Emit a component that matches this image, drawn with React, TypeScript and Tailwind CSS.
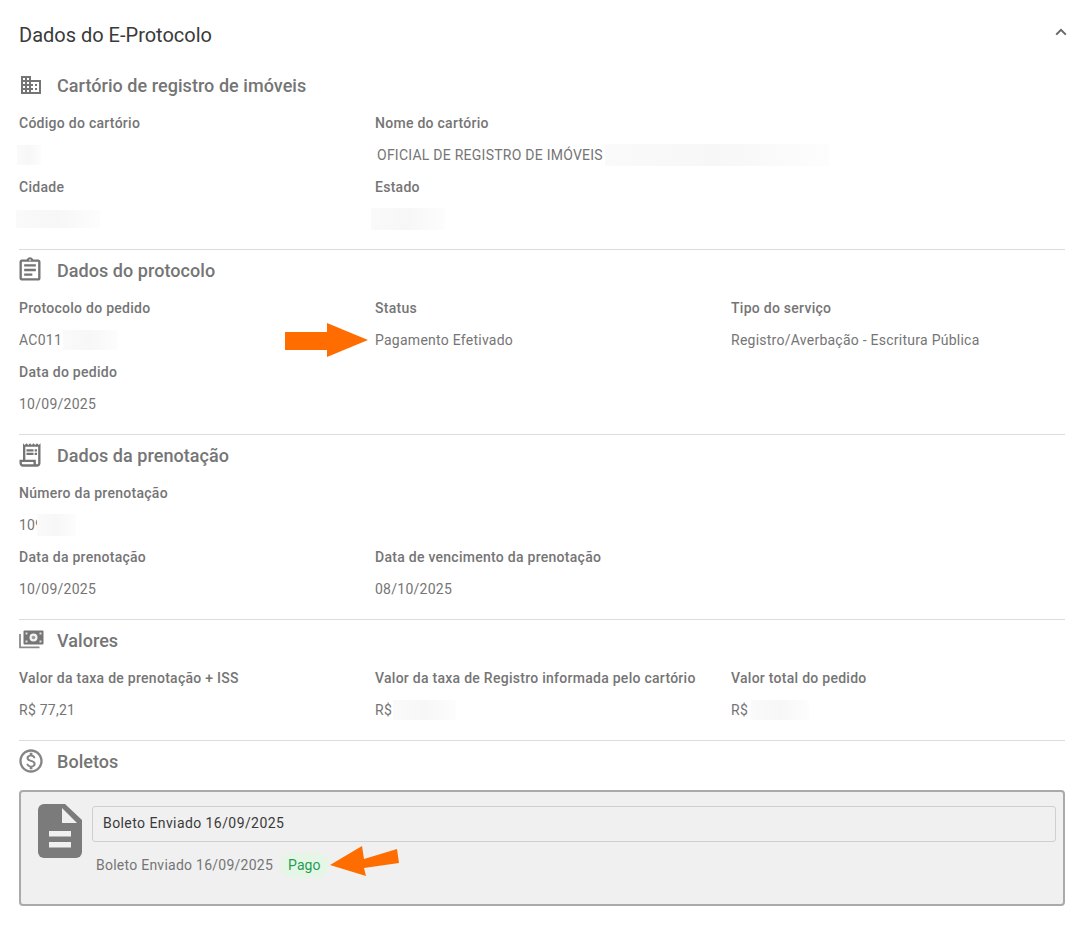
import type { ReactNode } from "react";
import {
  MdDomain,
  MdOutlineAssignment,
  MdOutlineReceiptLong,
  MdOutlineMonetizationOn,
} from "react-icons/md";

// White smudge that hides a redacted value in the screenshot.
function Redacted({ className }: { className: string }) {
  return <span className={`inline-block bg-gradient-to-r from-[#fafafa] via-[#f7f7f7] to-[#fdfdfd] ${className}`} />;
}

function Field({ label, children }: { label: string; children?: ReactNode }) {
  return (
    <div className="h-16 min-w-0">
      <div className="flex h-8 items-center text-[14px] font-medium text-[#757575] tracking-[0.27px] whitespace-nowrap">{label}</div>
      <div className="flex h-8 items-center text-[14px] text-[#757575] tracking-[0.25px] whitespace-nowrap">{children}</div>
    </div>
  );
}

function SectionTitle({ icon, title }: { icon: ReactNode; title: string }) {
  return (
    <div className="flex h-[42px] items-center pb-[2px] text-[#757575]">
      <span className="flex w-[38px] shrink-0 items-center">{icon}</span>
      <h3 className="text-[18px] font-medium tracking-[0.05px]">{title}</h3>
    </div>
  );
}

function Section({
  icon,
  title,
  children,
  divider = true,
}: {
  icon: ReactNode;
  title: string;
  children: ReactNode;
  divider?: boolean;
}) {
  return (
    <section className={divider ? "border-t border-[#dcdcdc] pb-[14px]" : "pb-[14px]"}>
      <SectionTitle icon={icon} title={title} />
      <div className="grid grid-cols-[356px_356px_1fr]">{children}</div>
    </section>
  );
}

function Arrow({ className, viewBox, points }: { className: string; viewBox: string; points: string }) {
  return (
    <svg className={`absolute ${className}`} viewBox={viewBox}>
      <polygon points={points} fill="#ff6d00" />
    </svg>
  );
}

function MoneyIcon() {
  return (
    <svg width="25" height="19" viewBox="0 0 25 19" className="mt-[-1px]">
      <rect x="4.5" y="0.5" width="20" height="14" rx="1" fill="#757575" />
      <circle cx="14.5" cy="7.5" r="4" fill="#f2f2f2" />
      <circle cx="14.5" cy="7.5" r="1.8" fill="#9a9a9a" />
      <rect x="6.5" y="2.5" width="2" height="2" fill="#e0e0e0" />
      <rect x="20.5" y="2.5" width="2" height="2" fill="#e0e0e0" />
      <rect x="6.5" y="10.5" width="2" height="2" fill="#e0e0e0" />
      <rect x="20.5" y="10.5" width="2" height="2" fill="#e0e0e0" />
      <path d="M1 4V17.4H20.5" fill="none" stroke="#8a8a8a" strokeWidth="1.8" />
    </svg>
  );
}

function FileIcon() {
  return (
    <svg className="h-[54px] w-[44px] shrink-0" viewBox="0 0 44 54">
      <path d="M6 0H27L44 16V48a6 6 0 0 1-6 6H6a6 6 0 0 1-6-6V6a6 6 0 0 1 6-6Z" fill="#7b7b7b" />
      <path d="M24 4L39 19H24Z" fill="#f0f0f0" />
      <rect x="11" y="27" width="22" height="5.5" fill="#f0f0f0" />
      <rect x="11" y="38" width="22" height="5.5" fill="#f0f0f0" />
    </svg>
  );
}

export default function App() {
  return (
    <div className="relative min-h-[925px] bg-white pl-[19px] pr-[15px] font-['Roboto',sans-serif]">
      <header className="flex h-[65px] items-center justify-between pt-[5px]">
        <h2 className="text-[20px] text-[#3a3a3a]">Dados do E-Protocolo</h2>
        <svg className="mb-[6px] mr-[-2px]" width="12" height="8" viewBox="0 0 12 8">
          <path d="M1.2 6.6L6 1.8l4.8 4.8" fill="none" stroke="#666666" strokeWidth="2" />
        </svg>
      </header>

      <Section divider={false} icon={<MdDomain size={24} />} title="Cartório de registro de imóveis">
        <Field label="Código do cartório">
          <Redacted className="-ml-[2px] h-5 w-6" />
        </Field>
        <div className="col-span-2">
          <Field label="Nome do cartório">
            <span className="ml-[2px]">OFICIAL DE REGISTRO DE IMÓVEIS</span>
            <Redacted className="ml-[2px] h-[22px] w-[224px]" />
          </Field>
        </div>
        <Field label="Cidade">
          <Redacted className="-ml-[3px] h-[18px] w-[84px]" />
        </Field>
        <div className="col-span-2">
          <Field label="Estado">
            <Redacted className="-ml-[4px] h-[22px] w-[74px]" />
          </Field>
        </div>
      </Section>

      <Section icon={<MdOutlineAssignment size={28} className="-ml-[3px]" />} title="Dados do protocolo">
        <Field label="Protocolo do pedido">
          AC011
          <Redacted className="ml-[1px] h-5 w-[55px]" />
        </Field>
        <Field label="Status">Pagamento Efetivado</Field>
        <Field label="Tipo do serviço">Registro/Averbação - Escritura Pública</Field>
        <Field label="Data do pedido">10/09/2025</Field>
      </Section>

      <Section icon={<MdOutlineReceiptLong size={28} className="-ml-[3px]" />} title="Dados da prenotação">
        <div className="col-span-3">
          <Field label="Número da prenotação">
            109
            <Redacted className="-ml-[6px] h-[22px] w-[39px]" />
          </Field>
        </div>
        <Field label="Data da prenotação">10/09/2025</Field>
        <div className="col-span-2">
          <Field label="Data de vencimento da prenotação">08/10/2025</Field>
        </div>
      </Section>

      <Section icon={<MoneyIcon />} title="Valores">
        <Field label="Valor da taxa de prenotação + ISS">R$ 77,21</Field>
        <Field label="Valor da taxa de Registro informada pelo cartório">
          R$
          <Redacted className="ml-[1px] h-5 w-[63px]" />
        </Field>
        <Field label="Valor total do pedido">
          R$
          <Redacted className="ml-[3px] h-5 w-[58px]" />
        </Field>
      </Section>

      <section className="border-t border-[#dcdcdc]">
        <SectionTitle icon={<MdOutlineMonetizationOn size={28} className="-ml-[2px] text-[#858585]" />} title="Boletos" />
        <div className="mt-[7px] flex h-[116px] gap-[10px] rounded-[4px] border-2 border-[#aaaaaa] bg-[#f0f0f0] pl-[17px] pr-[7px] pt-3">
          <FileIcon />
          <div className="min-w-0 flex-1">
            <div className="mt-[2px] flex h-9 items-center rounded-[3px] border border-[#cfcfcf] pb-[1px] pl-[10px] text-[14px] tracking-[0.42px] text-[#3a3a3a]">
              Boleto Enviado 16/09/2025
            </div>
            <div className="mt-[11px] flex items-center pl-1 text-[14px] tracking-[0.25px] text-[#757575]">
              Boleto Enviado 16/09/2025
              <span className="ml-[7px] flex h-[25px] items-center rounded-full bg-[#e6f6e6] px-2 tracking-[0.1px] text-[#1f9d55]">Pago</span>
            </div>
          </div>
        </div>
      </section>

      <Arrow
        className="left-[285px] top-[323px] h-[34px] w-[83px]"
        viewBox="0 0 83 34"
        points="0,9 42,9 42,0 83,17 42,34 42,27 0,27"
      />
      <Arrow
        className="left-[330px] top-[846px] h-[30px] w-[69px]"
        viewBox="0 0 69 30"
        points="0,19 32,0 34,13 67,3 69,17 34,22 36,30"
      />
    </div>
  );
}
